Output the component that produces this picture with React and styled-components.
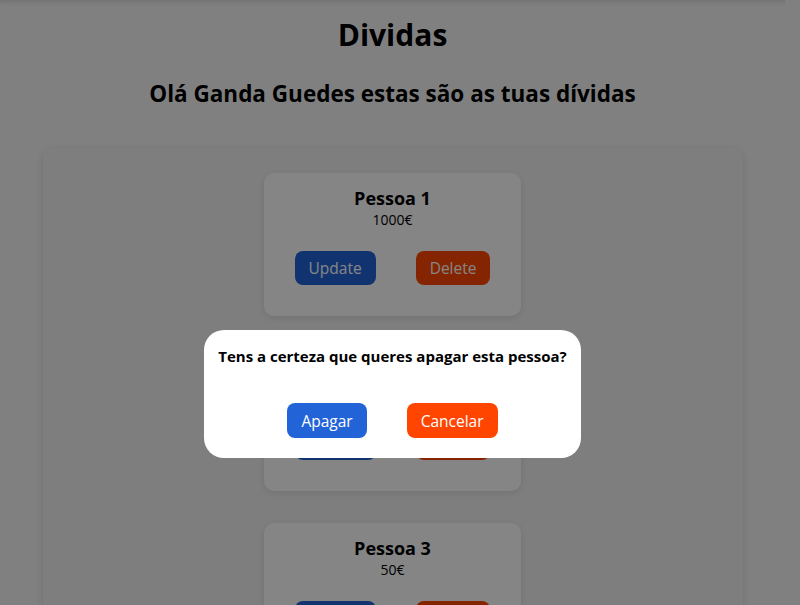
import React from "react";
import styled, { createGlobalStyle } from "styled-components";

const Global = createGlobalStyle`
  html, body { margin: 0; padding: 0; overflow: hidden; }
  body { background: #f6f6f6; font-family: "Open Sans", "Noto Sans", sans-serif; color: #000; }
`;

const Page = styled.div`
  width: 785px;
  min-height: 605px;
  background: #f6f6f6;
  box-shadow: inset 0 8px 8px -8px rgba(0,0,0,0.18);
  padding-top: 15px;
  box-sizing: border-box;
`;

const Title = styled.h1`
  margin: 0;
  font-size: 30px;
  line-height: 40px;
  font-weight: 700;
  text-align: center;
`;

const Subtitle = styled.h2`
  margin: 23px 0 0;
  font-size: 22.5px;
  line-height: 32px;
  font-weight: 700;
  text-align: center;
`;

const List = styled.div`
  width: 700px;
  margin: 38px auto 0;
  padding: 25px 0;
  background: #f2f2f2;
  border-radius: 10px;
  box-shadow: 0 2px 10px rgba(0,0,0,0.12);
  display: flex;
  flex-direction: column;
  align-items: center;
  gap: 32px;
`;

const Card = styled.div`
  width: 257px;
  box-sizing: border-box;
  padding: 13px 0 31px;
  background: #ffffff;
  border-radius: 10px;
  box-shadow: 0 2px 8px rgba(0,0,0,0.1);
  text-align: center;
`;

const Name = styled.div`
  font-size: 18px;
  line-height: 24px;
  font-weight: 700;
`;

const Amount = styled.div`
  font-size: 14px;
  line-height: 20px;
`;

const Actions = styled.div`
  display: flex;
  justify-content: center;
  gap: 40px;
  margin-top: ${(p) => p.$top}px;
`;

const Button = styled.button`
  border: none;
  border-radius: 8px;
  height: ${(p) => p.$h}px;
  padding: 0 14px;
  font-family: inherit;
  font-size: 15.5px;
  color: #fff;
  background: ${(p) => (p.$danger ? "#ff4500" : "#2264d8")};
  cursor: pointer;
`;

const Overlay = styled.div`
  position: fixed;
  inset: 0;
  background: rgba(0,0,0,0.48);
  display: flex;
  justify-content: center;
  align-items: flex-start;
  padding: 330px 15px 0 0;
`;

const Modal = styled.div`
  width: 377px;
  box-sizing: border-box;
  padding: 16px 0 20px;
  background: #fff;
  border-radius: 20px;
  text-align: center;
`;

const Question = styled.div`
  font-size: 15px;
  line-height: 20px;
  font-weight: 700;
`;

const people = [
  { name: "Pessoa 1", amount: "1000€" },
  { name: "Pessoa 2", amount: "200€" },
  { name: "Pessoa 3", amount: "50€" },
];

export default function App() {
  return (
    <>
      <Global />
      <Page>
        <Title>Dividas</Title>
        <Subtitle>Olá Ganda Guedes estas são as tuas dívidas</Subtitle>
        <List>
          {people.map((p) => (
            <Card key={p.name}>
              <Name>{p.name}</Name>
              <Amount>{p.amount}</Amount>
              <Actions $top={21}>
                <Button $h={34}>Update</Button>
                <Button $h={34} $danger>Delete</Button>
              </Actions>
            </Card>
          ))}
        </List>
      </Page>
      <Overlay>
        <Modal>
          <Question>Tens a certeza que queres apagar esta pessoa?</Question>
          <Actions $top={37}>
            <Button $h={35}>Apagar</Button>
            <Button $h={35} $danger>Cancelar</Button>
          </Actions>
        </Modal>
      </Overlay>
    </>
  );
}
